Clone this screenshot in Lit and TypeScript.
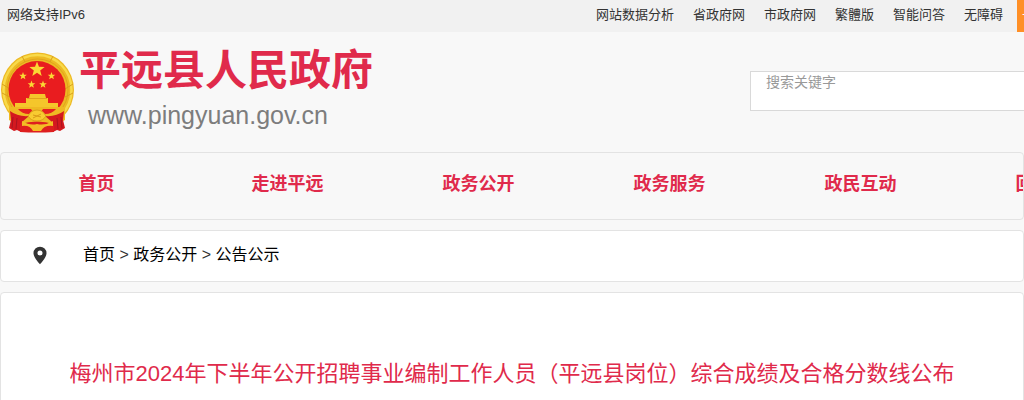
import { LitElement, html, css, svg } from "lit";
import { customElement } from "lit/decorators.js";

const TOP_LINKS = ["网站数据分析", "省政府网", "市政府网", "繁體版", "智能问答", "无障碍"];
const NAV = ["首页", "走进平远", "政务公开", "政务服务", "政民互动", "回应关切"];
const CRUMBS = ["首页", "政务公开", "公告公示"];

const star = (cx: number, cy: number, r: number) => {
  const pts = Array.from({ length: 10 }, (_, i) => {
    const a = (Math.PI * i) / 5 - Math.PI / 2;
    const d = i % 2 ? r * 0.42 : r;
    return `${(cx + d * Math.cos(a)).toFixed(2)},${(cy + d * Math.sin(a)).toFixed(2)}`;
  });
  return svg`<polygon points=${pts.join(" ")} fill="#fbd834"/>`;
};

@customElement("site-emblem")
class SiteEmblem extends LitElement {
  static styles = css`
    :host { display: block; flex: none; }
    svg { display: block; }
  `;
  render() {
    return html`<svg width="75" height="81" viewBox="0 0 75 81" aria-hidden="true">
      <ellipse cx="37.5" cy="38" rx="36.5" ry="37.500" fill="#edb923"/>
      <ellipse cx="37.5" cy="38" rx="34" ry="35" fill="none" stroke="#f8da4a" stroke-width="2.500"/>
      <ellipse cx="37.5" cy="38" rx="30.500" ry="31" fill="none" stroke="#e0a41c" stroke-width="1"/>
      <path d="M2 32l8 5M2 41l8 4M73 32l-8 5M73 41l-8 4M22 4l3 6M53 4l-3 6" stroke="#d9a01c" stroke-width="1"/>
      <circle cx="37" cy="37.500" r="28.500" fill="#e91c1f"/>
      ${star(37, 17.5, 8)}${star(23, 24, 4)}${star(51.5, 24, 4)}${star(31.5, 32.5, 4)}${star(43, 32.5, 4)}
      <path d="M30 42h15l1 4h-17zM26 46h22v5H26z" fill="#f5c62b"/>
      <path d="M27 46.500h20" stroke="#e0a41c" stroke-width="1"/>
      <path d="M15 51h43v4H15z" fill="#f5c62b"/>
      <path d="M9 55h56v13l-10 6H19L9 68z" fill="#efb923"/>
      <path d="M18 57h13l2 3-4 2q-7 0-11-5zM56 57H43l-2 3 4 2q7 0 11-5z" fill="#e62020"/>
      <path d="M10 59q8 6 19 5l-7 6-1 10-4-2-3 1-5-3 2-8z" fill="#d4191f"/>
      <path d="M64 59q-8 6-19 5l7 6 1 10 4-2 3 1 5-3-2-8z" fill="#d4191f"/>
      <path d="M20 72q17-5 34 0v8q-17 1-34 0z" fill="#de1f1f"/>
      <path d="M31 60q6-4 12 0l3 4q-3 5-9 5t-9-5z" fill="#f8cb31" stroke="#dba01b" stroke-width="1"/>
      <path d="M33 63l8 2M41 62l-8 4" stroke="#d99a18" stroke-width="1"/>
      <path d="M22 69q8 5 15 3 8 2 16-3v5q-9-1-12 5h-8q-3-6-11-5z" fill="#f4bd25"/>
      <path d="M13 65l-1 11M17 66l-1 11M61 65l1 11M57 66l1 11" stroke="#a91420" stroke-width="1"/>
    </svg>`;
  }
}

@customElement("app-root")
class AppRoot extends LitElement {
  static styles = css`
    :host {
      display: block;
      min-height: 100vh;
      overflow: hidden;
      background: #f8f8f8;
      color: #333;
      font-family: "Liberation Sans", "Noto Sans CJK SC", sans-serif;
      font-size: 13px;
    }
    * { box-sizing: border-box; }
    a { color: inherit; text-decoration: none; white-space: nowrap; }
    .topbar { display: flex; height: 32px; line-height: 30px; background: #f1f1f1; overflow: hidden; }
    .ipv6 { padding-left: 7px; white-space: nowrap; }
    .links { display: flex; gap: 19px; margin-left: auto; padding-right: 14px; }
    .elder { width: 7px; padding-left: 5px; overflow: hidden; background: #ff8f26; color: #fff; }
    .header { display: grid; grid-template-columns: 750px minmax(0, 1fr); height: 120px; }
    .brand { display: flex; gap: 4px; padding-top: 20px; align-items: flex-start; }
    .words { display: flex; flex-direction: column; margin-top: -8px; }
    .name { margin: 0; font-size: 42px; line-height: 54px; font-weight: 700; color: #e02a4b; }
    .domain { padding-left: 9px; font-size: 25px; line-height: 34px; color: #7d7d7d; }
    .search { height: 40px; margin-top: 39px; background: #fff; border: 1px solid #d9d9d9; border-right: 0; overflow: hidden; }
    .search input {
      display: block; width: 100%; height: 20px; padding: 0 15px; border: 0; outline: 0;
      background: none; font: inherit; font-size: 14px; color: #333;
    }
    .search input::placeholder { color: #999; opacity: 1; }
    .card { border: 1px solid #e3e3e3; border-radius: 4px; margin-bottom: 10px; }
    .white { background: #fff; }
    .nav { display: flex; height: 68px; overflow: hidden; }
    .nav a { flex: 0 0 191px; text-align: center; font-size: 18px; line-height: 62px; font-weight: 700; color: #e02a4b; }
    .crumbs { display: flex; align-items: center; height: 52px; padding: 0 32px 2px; }
    .crumbs svg { flex: none; }
    .trail { padding-left: 36px; font-size: 16px; line-height: 24px; }
    .trail a { color: #000; }
    .article { padding: 60px 20px; margin-bottom: 0; }
    .article h1 { margin: 0; text-align: center; font-size: 22px; line-height: 42px; font-weight: 400; color: #e02a4b; }
  `;
  render() {
    return html`
      <div class="topbar">
        <span class="ipv6">网络支持IPv6</span>
        <div class="links">${TOP_LINKS.map((t) => html`<a href="#">${t}</a>`)}</div>
        <a class="elder" href="#">长者助手</a>
      </div>
      <header class="header">
        <div class="brand">
          <site-emblem></site-emblem>
          <div class="words">
            <div class="name">平远县人民政府</div>
            <div class="domain">www.pingyuan.gov.cn</div>
          </div>
        </div>
        <form class="search"><input type="text" aria-label="搜索关键字" placeholder="搜索关键字" /></form>
      </header>
      <nav class="card nav">${NAV.map((t) => html`<a href="#">${t}</a>`)}</nav>
      <div class="card white crumbs">
        <svg width="14" height="19" viewBox="0 0 15 20" aria-hidden="true">
          <path fill="#333" fill-rule="evenodd" d="M7.500 0.500A7 7 0 0 0 0.500 7.500C0.500 12 7.500 19.500 7.500 19.500S14.500 12 14.500 7.500A7 7 0 0 0 7.500 0.500ZM7.500 4.600A2.700 2.700 0 1 1 7.500 10A2.700 2.700 0 1 1 7.500 4.600Z"/>
        </svg>
        <div class="trail">${CRUMBS.map((t, i) => html`${i ? " > " : ""}<a href="#">${t}</a>`)}</div>
      </div>
      <main class="card white article">
        <h1>梅州市2024年下半年公开招聘事业编制工作人员（平远县岗位）综合成绩及合格分数线公布</h1>
      </main>
    `;
  }
}
